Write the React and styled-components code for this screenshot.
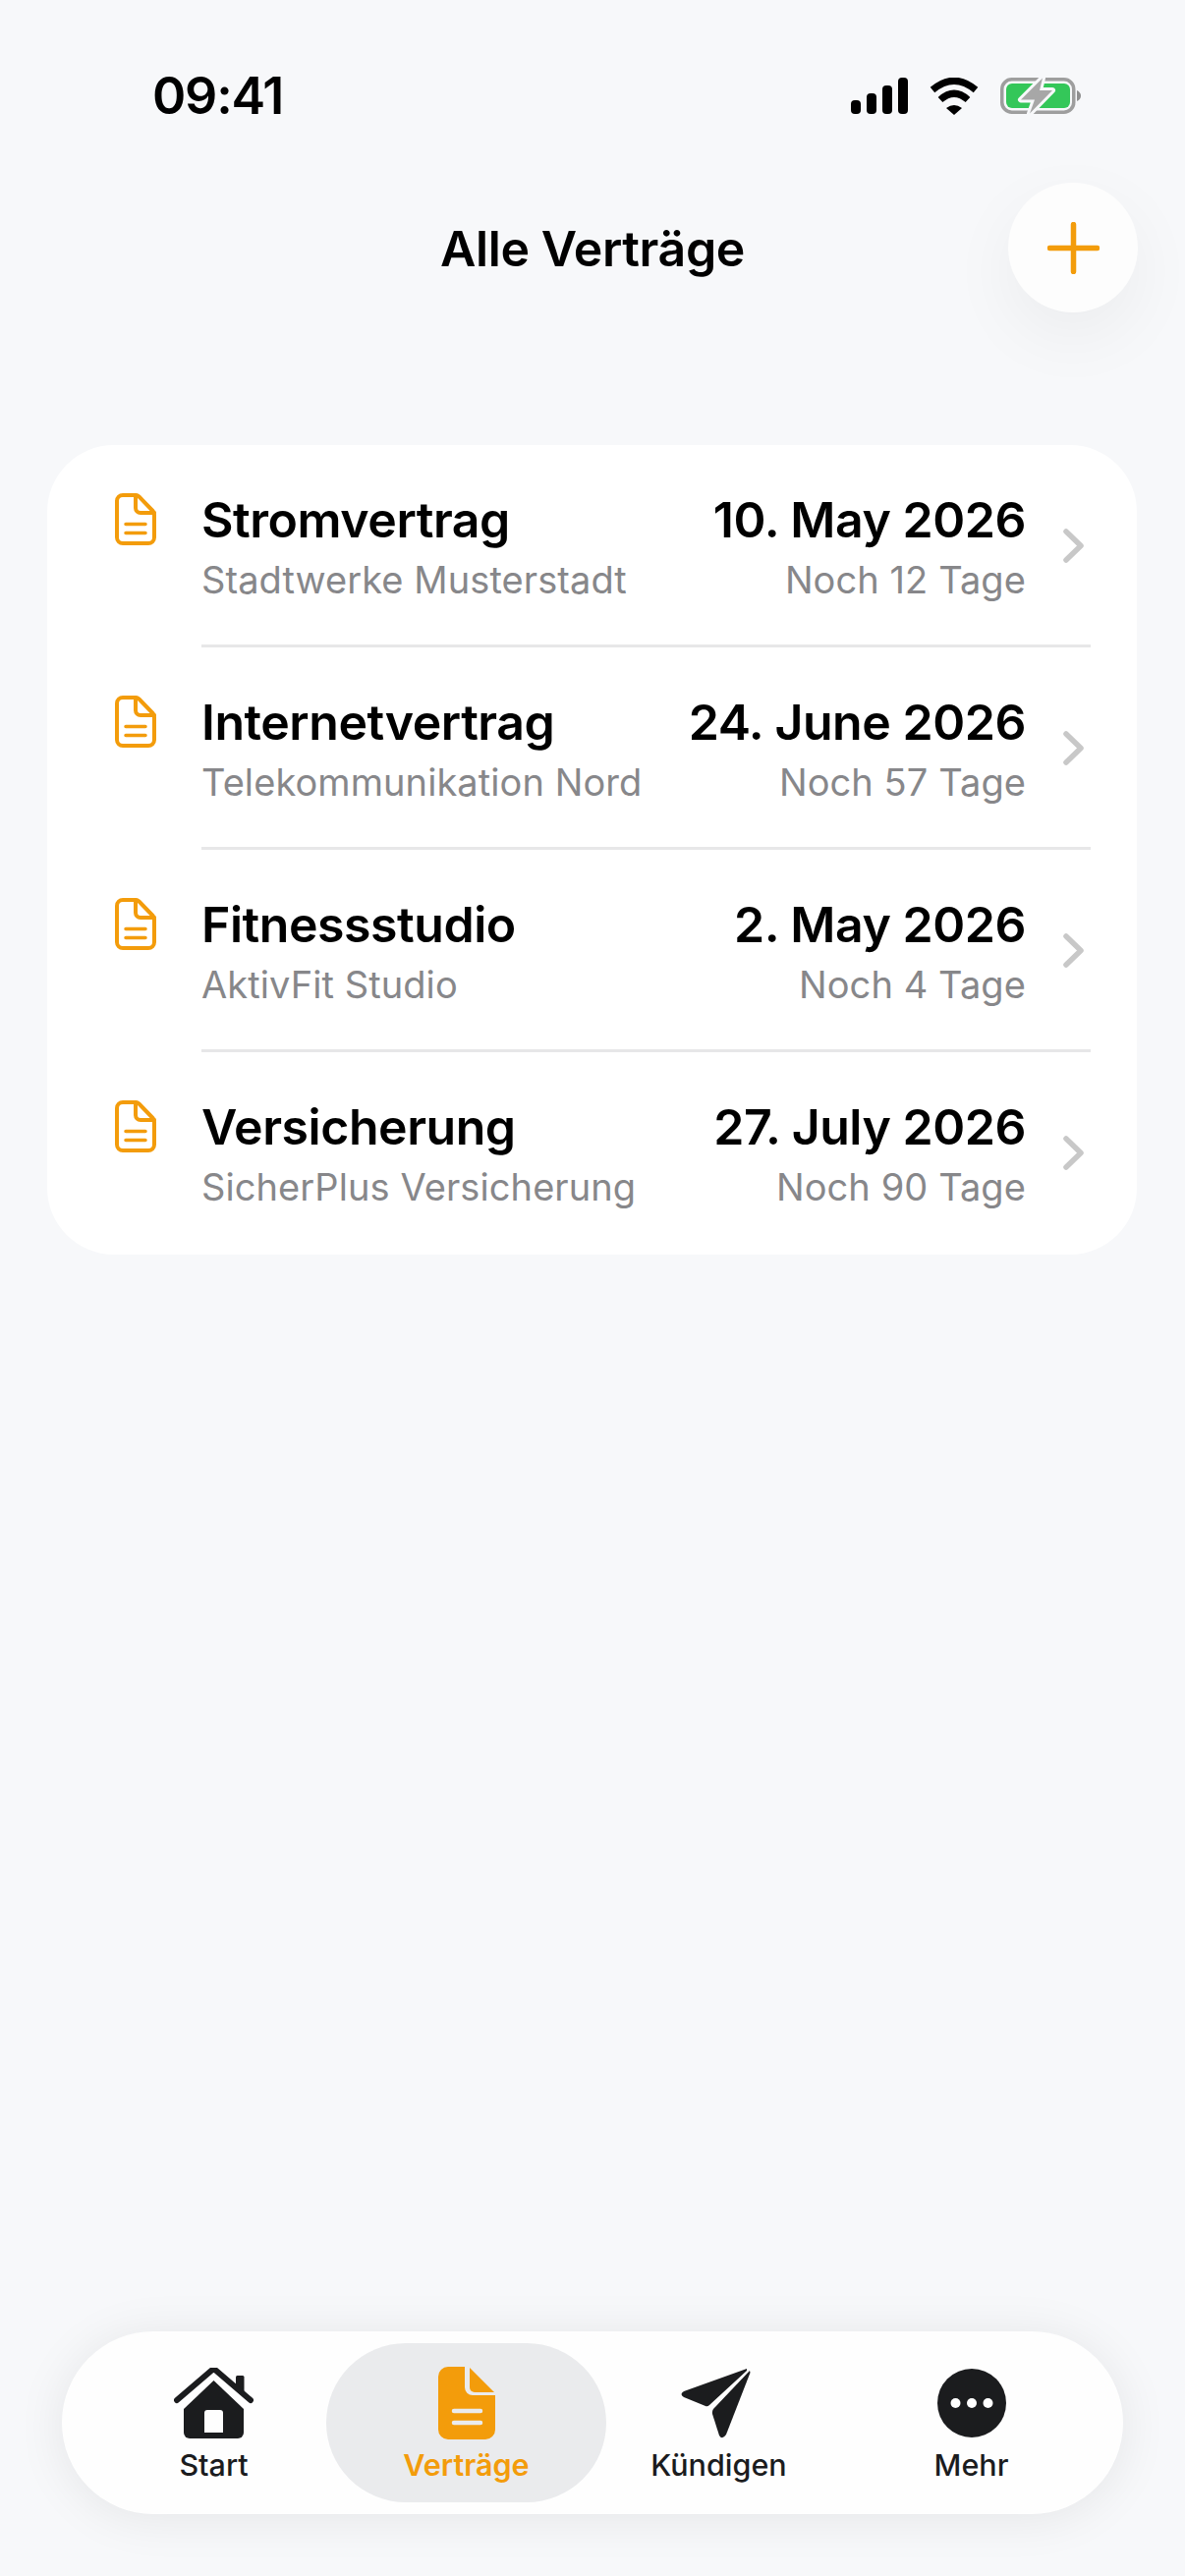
import React from 'react'
import styled, { createGlobalStyle } from 'styled-components'

const orange = '#f39c0b'
const ink = '#1b1c1e'

const contracts = [
    { title: 'Stromvertrag', company: 'Stadtwerke Musterstadt', date: '10. May 2026', left: 'Noch 12 Tage' },
    { title: 'Internetvertrag', company: 'Telekommunikation Nord', date: '24. June 2026', left: 'Noch 57 Tage' },
    { title: 'Fitnessstudio', company: 'AktivFit Studio', date: '2. May 2026', left: 'Noch 4 Tage' },
    { title: 'Versicherung', company: 'SicherPlus Versicherung', date: '27. July 2026', left: 'Noch 90 Tage' },
]

function SignalIcon() {
    return (
        <svg width="58" height="37" viewBox="0 0 58 37" fill="#000">
            <rect x="0" y="23" width="10" height="14" rx="4" />
            <rect x="16" y="16" width="10" height="21" rx="4" />
            <rect x="32" y="8" width="10" height="29" rx="4" />
            <rect x="48" y="0" width="10" height="37" rx="4" />
        </svg>
    )
}

function WifiIcon() {
    return (
        <svg width="50" height="38" viewBox="0 0 50 38">
            <path d="M3 12.5 Q25 -6 47 12.5" fill="none" stroke="#000" strokeWidth="7" />
            <path d="M11 22.5 Q25 10 39 22.5" fill="none" stroke="#000" strokeWidth="7" />
            <path d="M17 31 Q25 25 33 31 L25 38 Z" fill="#000" />
        </svg>
    )
}

function BatteryIcon() {
    return (
        <svg width="82" height="39" viewBox="0 0 82 39">
            <rect x="1.750" y="2.750" width="73" height="33.500" rx="10" fill="none" stroke="#9e9e9e" strokeWidth="3.500" />
            <rect x="6" y="7" width="65" height="25" rx="6" fill="#34c759" />
            <path d="M78 14 q4 2 4 5.500 t-4 5.500 Z" fill="#8f8f8f" />
            <path d="M43 1.500 L21 23.500 H35 L30 37.500 L53 14 H40 Z" fill="#a7a7a7" stroke="#f7f8fa" strokeWidth="6" strokeLinejoin="round" paintOrder="stroke" />
        </svg>
    )
}

function PlusIcon() {
    return (
        <svg width="53" height="53" viewBox="0 0 53 53" fill="none" stroke={orange} strokeWidth="5.500" strokeLinecap="round">
            <path d="M26.500 2.500 V50.500 M2.500 26.500 H50.500" />
        </svg>
    )
}

function DocOutlineIcon() {
    return (
        <svg width="42" height="53" viewBox="0 0 42 53" fill="none" stroke={orange} strokeWidth="4" strokeLinecap="round" strokeLinejoin="round">
            <path d="M8 2 H21 Q23 2 24.500 3.500 L38.500 18 Q40 19.500 40 22 V45 a6 6 0 0 1 -6 6 H8 a6 6 0 0 1 -6 -6 V8 a6 6 0 0 1 6 -6 Z" />
            <path d="M21 2 V15 a5 5 0 0 0 5 5 H40" />
            <path d="M11 31.500 H31 M11 40.500 H31" strokeWidth="3.500" />
        </svg>
    )
}

function ChevronIcon() {
    return (
        <svg width="21" height="35" viewBox="0 0 21 35" fill="none" stroke="#c8c8c8" strokeWidth="5.500" strokeLinecap="round" strokeLinejoin="round">
            <path d="M3 3 L18 17.500 L3 32" />
        </svg>
    )
}

function HomeIcon() {
    return (
        <svg width="81" height="72" viewBox="0 0 81 72" fill={ink}>
            <rect x="63" y="8" width="8.500" height="20" rx="1.500" />
            <path d="M3 33.500 L40.500 3 L78 33.500" fill="#fefefe" stroke="none" />
            <path d="M3 33 L38 3 Q40.500 1 43 3 L78 33" fill="none" stroke={ink} strokeWidth="6" strokeLinecap="round" strokeLinejoin="round" />
            <path d="M40.500 13 L71 42 V66 a6 6 0 0 1 -6 6 H16 a6 6 0 0 1 -6 -6 V42 Z" />
            <path d="M31 46 a3 3 0 0 1 3 -3 H47 a3 3 0 0 1 3 3 V66 H31 Z" fill="#fefefe" />
        </svg>
    )
}

function DocFilledIcon() {
    return (
        <svg width="58" height="74" viewBox="0 0 58 74" fill={orange}>
            <path d="M10 0 H27 V21 a8 8 0 0 0 8 8 H58 V64 a10 10 0 0 1 -10 10 H10 a10 10 0 0 1 -10 -10 V10 A10 10 0 0 1 10 0 Z" />
            <path d="M32 1 L57 26 H37 a5 5 0 0 1 -5 -5 Z" />
            <path d="M16 45 H43 M16 57 H43" stroke="#eaebed" strokeWidth="4.500" strokeLinecap="round" />
        </svg>
    )
}

function PlaneIcon() {
    return (
        <svg width="77" height="72" viewBox="0 0 77 72" fill={ink}>
            <path d="M67 1 L3 24 Q-2 27 3 30 L25 39 Q27 40 29 38 L67 3 Z" />
            <path d="M70.500 5 L46 68 Q42 74 39 69 L32 47 Q31.500 44 33 42 L70 3 Z" />
        </svg>
    )
}

function MoreIcon() {
    return (
        <svg width="70" height="70" viewBox="0 0 70 70">
            <circle cx="35" cy="35" r="35" fill={ink} />
            <circle cx="18.500" cy="35" r="5" fill="#fff" />
            <circle cx="35" cy="35" r="5" fill="#fff" />
            <circle cx="51.500" cy="35" r="5" fill="#fff" />
        </svg>
    )
}

const tabs = [
    { label: 'Start', icon: <HomeIcon /> },
    { label: 'Verträge', icon: <DocFilledIcon />, active: true },
    { label: 'Kündigen', icon: <PlaneIcon /> },
    { label: 'Mehr', icon: <MoreIcon /> },
]

function App() {
    return (
        <Page>
            <GlobalStyle />
            <StatusBar>
                <Time>09:41</Time>
                <StatusIcons>
                    <SignalIcon />
                    <WifiIcon />
                    <BatteryIcon />
                </StatusIcons>
            </StatusBar>

            <Header>
                <Title>Alle Verträge</Title>
                <AddButton aria-label="Vertrag hinzufügen">
                    <PlusIcon />
                </AddButton>
            </Header>

            <Card>
                {contracts.map((item, i) => (
                    <Row key={item.title}>
                        <RowIcon>
                            <DocOutlineIcon />
                        </RowIcon>
                        <RowBody $last={i === contracts.length - 1}>
                            <RowText>
                                <RowTitle>{item.title}</RowTitle>
                                <RowSub>{item.company}</RowSub>
                            </RowText>
                            <RowDates>
                                <RowTitle>{item.date}</RowTitle>
                                <RowSub>{item.left}</RowSub>
                            </RowDates>
                            <RowChevron>
                                <ChevronIcon />
                            </RowChevron>
                        </RowBody>
                    </Row>
                ))}
            </Card>

            <TabBar>
                {tabs.map((tab) => (
                    <Tab key={tab.label} $active={tab.active}>
                        <TabIcon>{tab.icon}</TabIcon>
                        <TabLabel $active={tab.active}>{tab.label}</TabLabel>
                    </Tab>
                ))}
            </TabBar>
        </Page>
    )
}

export default App

const GlobalStyle = createGlobalStyle`
    * {
        box-sizing: border-box;
    }

    body {
        margin: 0;
        background: #f7f8fa;
        font-family: Inter, "Liberation Sans", sans-serif;
    }
`

const Page = styled.div`
    width: 1206px;
    height: 2622px;
    display: flex;
    flex-direction: column;
    overflow: hidden;
    background: #f7f8fa;
    color: #000;
`

const StatusBar = styled.div`
    height: 186px;
    padding: 68px 106px 0 155px;
    display: flex;
    justify-content: space-between;
    align-items: flex-start;
`

const Time = styled.div`
    font-size: 52px;
    line-height: 60px;
    font-weight: 600;
    letter-spacing: -1.2px;
`

const StatusIcons = styled.div`
    margin-top: 10px;
    display: flex;
    align-items: center;
    gap: 22px;
`

const Header = styled.div`
    height: 132px;
    padding-right: 48px;
    display: grid;
    grid-template-columns: 1fr auto 1fr;
    align-items: center;
`

const Title = styled.h1`
    grid-column: 2;
    margin: 2px 0 0;
    padding-left: 48px;
    font-size: 50px;
    line-height: 60px;
    font-weight: 600;
    letter-spacing: -0.4px;
    white-space: nowrap;
`

const AddButton = styled.button`
    grid-column: 3;
    justify-self: end;
    width: 132px;
    height: 132px;
    padding: 0;
    border: none;
    border-radius: 50%;
    background: #fdfdfd;
    box-shadow: 0 24px 70px rgba(0, 0, 0, 0.05);
    display: flex;
    align-items: center;
    justify-content: center;
`

const Card = styled.div`
    margin: 135px 49px 0 48px;
    padding-left: 69px;
    border-radius: 68px;
    background: #fff;
`

const Row = styled.div`
    height: 206px;
    display: flex;
`

const RowIcon = styled.div`
    width: 42px;
    padding-top: 49px;
    display: flex;
    align-items: flex-start;
`

const RowBody = styled.div`
    flex: 1;
    margin: 0 47px 0 46px;
    padding: 46px 7px 0 0;
    display: flex;
    align-items: flex-start;
    border-bottom: ${(p) => (p.$last ? 'none' : '3px solid #e7e7e8')};
`

const RowText = styled.div`
    flex: 1;
`

const RowDates = styled.div`
    text-align: right;
`

const RowTitle = styled.div`
    font-size: 50px;
    line-height: 60px;
    font-weight: 600;
    letter-spacing: -0.45px;
    white-space: nowrap;
`

const RowSub = styled.div`
    margin-top: 8px;
    font-size: 38px;
    line-height: 46px;
    letter-spacing: 0.08px;
    color: #87878a;
    white-space: nowrap;
`

const RowChevron = styled.div`
    margin-left: 38px;
    height: 113px;
    display: flex;
    align-items: center;
`

const TabBar = styled.nav`
    margin: auto 63px 63px 63px;
    height: 186px;
    padding: 12px 26px;
    border-radius: 93px;
    background: #fefefe;
    box-shadow: 0 4px 50px rgba(0, 0, 0, 0.08);
    display: grid;
    grid-template-columns: repeat(4, 257px);
`

const Tab = styled.div`
    margin: ${(p) => (p.$active ? '0 -14px' : '0')};
    border-radius: 81px;
    background: ${(p) => (p.$active ? '#eaebed' : 'transparent')};
    display: flex;
    flex-direction: column;
    align-items: center;
`

const TabIcon = styled.div`
    height: 74px;
    margin-top: 24px;
    display: flex;
    align-items: center;
    justify-content: center;
`

const TabLabel = styled.div`
    margin-top: 8px;
    font-size: 30.500px;
    line-height: 36px;
    font-weight: ${(p) => (p.$active ? 600 : 500)};
    color: ${(p) => (p.$active ? orange : ink)};
`
